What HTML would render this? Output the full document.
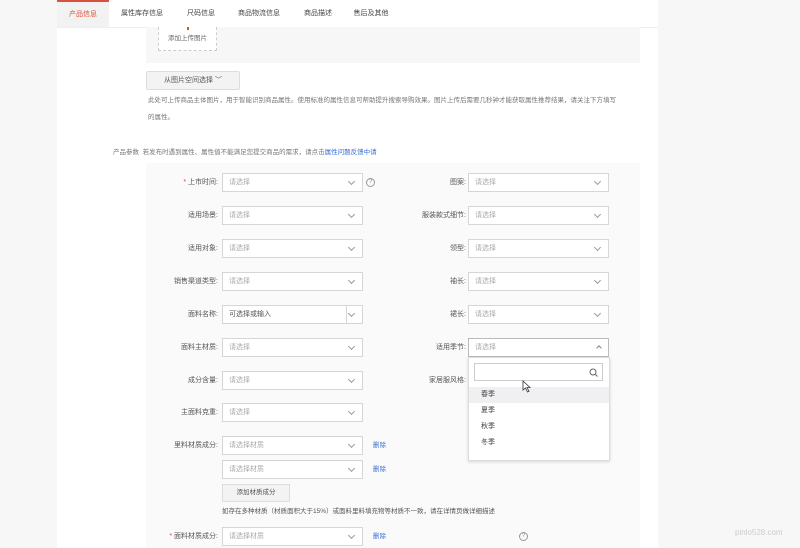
<!DOCTYPE html>
<html><head><meta charset="utf-8"><style>
*{margin:0;padding:0;box-sizing:border-box}
body{width:800px;height:548px;overflow:hidden;background:#f7f7f7;font-family:"Liberation Sans","Noto Sans CJK SC",sans-serif;font-size:7px;color:#555;position:relative}
.a{position:absolute}
.panel{left:57px;top:0;width:601px;height:548px;background:#fff}
.tab{top:0;height:27px;line-height:27px;font-size:7px;color:#444;text-align:center}
.sel{height:19px;border:1px solid #d6d6d6;background:#fff;color:#aaa;padding-left:6px;line-height:17px;font-size:7px}
.sel:after{content:"";position:absolute;right:8px;top:5px;width:4px;height:4px;border-right:1px solid #999;border-bottom:1px solid #999;transform:rotate(45deg)}
.lb{text-align:right;width:100px;font-size:7px;color:#555;line-height:19px}
.del{color:#3b6fd6;font-size:6.5px;line-height:19px}
.q{width:9px;height:9px;border:1px solid #999;border-radius:50%;font-size:6px;text-align:center;line-height:7px;color:#888}
</style></head><body>
<div class="a panel"></div>
<div class="a" style="left:57px;top:27px;width:601px;height:1px;background:#eee"></div>
<div class="a tab" style="left:57px;width:52px;background:#f2f2f2;color:#d9503e;border-top:2px solid #d9503e;line-height:25px">产品信息</div>
<div class="a tab" style="left:112px;width:60px">属性库存信息</div>
<div class="a tab" style="left:176px;width:50px">尺码信息</div>
<div class="a tab" style="left:229px;width:60px">商品物流信息</div>
<div class="a tab" style="left:293px;width:50px">商品描述</div>
<div class="a tab" style="left:345px;width:52px">售后及其他</div>
<div class="a" style="left:146px;top:27px;width:494px;height:36px;background:#f7f7f7"></div>
<div class="a" style="left:158px;top:27px;width:59px;height:24px;border:1px dashed #ccc;border-top:none;background:#fff;text-align:center;line-height:24px;font-size:6.5px;color:#666">添加上传图片</div>
<div class="a" style="left:187px;top:27px;width:2px;height:3px;background:#d9503e"></div>
<div class="a" style="left:146px;top:71px;width:94px;height:19px;border:1px solid #ddd;background:#f3f3f3;border-radius:2px;text-align:center;line-height:17px;font-size:7px;color:#555">从图片空间选择 ﹀</div>
<div class="a" style="left:148px;top:92px;width:472px;font-size:6.5px;color:#777;line-height:17px">此处可上传商品主体图片，用于智能识别商品属性。使用标准的属性信息可帮助提升搜索导购效果。图片上传后需要几秒钟才能获取属性推荐结果，请关注下方填写的属性。</div>
<div class="a" style="left:113px;top:146px;font-size:6.5px;color:#777">产品参数&nbsp;&nbsp;若发布时遇到属性、属性值不能满足您提交商品的需求，请点击<span style="color:#3b6fd6">属性问题反馈中请</span></div>
<div class="a" style="left:146px;top:163px;width:494px;height:385px;background:#fafafa"></div>

<div class="a lb" style="left:118px;top:173px"><span style="color:#d9503e">* </span>上市时间:</div><div class="a sel" style="left:222px;top:173px;width:141px">请选择</div><div class="a q" style="left:366px;top:178px">?</div>
<div class="a lb" style="left:118px;top:206px">适用场景:</div><div class="a sel" style="left:222px;top:206px;width:141px">请选择</div>
<div class="a lb" style="left:118px;top:239px">适用对象:</div><div class="a sel" style="left:222px;top:239px;width:141px">请选择</div>
<div class="a lb" style="left:118px;top:272px">销售渠道类型:</div><div class="a sel" style="left:222px;top:272px;width:141px">请选择</div>
<div class="a lb" style="left:118px;top:305px">面料名称:</div><div class="a sel" style="left:222px;top:305px;width:141px;color:#555">可选择或输入</div><div class="a" style="left:346px;top:305px;width:1px;height:19px;background:#d6d6d6"></div>
<div class="a lb" style="left:118px;top:338px">面料主材质:</div><div class="a sel" style="left:222px;top:338px;width:141px">请选择</div>
<div class="a lb" style="left:118px;top:371px">成分含量:</div><div class="a sel" style="left:222px;top:371px;width:141px">请选择</div>
<div class="a lb" style="left:118px;top:403px">主面料克重:</div><div class="a sel" style="left:222px;top:403px;width:141px">请选择</div>
<div class="a lb" style="left:118px;top:436px">里料材质成分:</div><div class="a sel" style="left:222px;top:436px;width:141px">请选择材质</div><div class="a del" style="left:373px;top:436px">删除</div>
<div class="a sel" style="left:222px;top:460px;width:141px">请选择材质</div><div class="a del" style="left:373px;top:460px">删除</div>
<div class="a" style="left:222px;top:484px;width:68px;height:18px;border:1px solid #ddd;background:#f3f3f3;text-align:center;line-height:16px;font-size:6.5px;color:#555">添加材质成分</div>
<div class="a" style="left:222px;top:505px;font-size:6.5px;color:#555">如存在多种材质（材质面积大于15%）或面料里料填充物等材质不一致，请在详情页做详细描述</div>
<div class="a lb" style="left:118px;top:527px"><span style="color:#d9503e">* </span>面料材质成分:</div><div class="a sel" style="left:222px;top:527px;width:141px">请选择材质</div><div class="a del" style="left:373px;top:527px">删除</div><div class="a q" style="left:519px;top:532px">?</div>

<div class="a lb" style="left:366px;top:173px">图案:</div><div class="a sel" style="left:468px;top:173px;width:141px">请选择</div>
<div class="a lb" style="left:366px;top:206px">服装款式细节:</div><div class="a sel" style="left:468px;top:206px;width:141px">请选择</div>
<div class="a lb" style="left:366px;top:239px">领型:</div><div class="a sel" style="left:468px;top:239px;width:141px">请选择</div>
<div class="a lb" style="left:366px;top:272px">袖长:</div><div class="a sel" style="left:468px;top:272px;width:141px">请选择</div>
<div class="a lb" style="left:366px;top:305px">裙长:</div><div class="a sel" style="left:468px;top:305px;width:141px">请选择</div>
<div class="a lb" style="left:366px;top:338px">适用季节:</div><div class="a" style="left:468px;top:338px;width:141px;height:19px;border:1px solid #bbb;background:#fff;color:#aaa;padding-left:6px;line-height:17px">请选择<span class="a" style="right:7px;top:7px;width:4px;height:4px;border-left:1px solid #888;border-top:1px solid #888;transform:rotate(45deg)"></span></div>
<div class="a lb" style="left:366px;top:371px">家居服风格:</div>
<div class="a" style="left:468px;top:357px;width:142px;height:104px;background:#fff;border:1px solid #ddd;box-shadow:0 1px 3px rgba(0,0,0,.15)"></div>
<div class="a" style="left:474px;top:363px;width:129px;height:18px;border:1px solid #ccc;background:#fff"><svg class="a" style="right:4px;top:4px" width="9" height="9" viewBox="0 0 9 9"><circle cx="4" cy="4" r="3" fill="none" stroke="#666" stroke-width="1"/><line x1="6.2" y1="6.2" x2="8.5" y2="8.5" stroke="#666"/></svg></div>
<div class="a" style="left:469px;top:387px;width:140px;height:16px;background:#f0f0f2"></div>
<div class="a" style="left:481px;top:387px;line-height:16px;color:#444">春季</div>
<div class="a" style="left:481px;top:403px;line-height:16px;color:#444">夏季</div>
<div class="a" style="left:481px;top:419px;line-height:16px;color:#444">秋季</div>
<div class="a" style="left:481px;top:435px;line-height:16px;color:#444">冬季</div>
<svg class="a" style="left:522px;top:380px" width="10" height="13" viewBox="0 0 10 13"><path d="M1 1 L1 10 L3.5 8 L5.5 12 L7 11.3 L5 7.5 L8 7.5 Z" fill="#fff" stroke="#333" stroke-width="0.8"/></svg>
<div class="a" style="left:735px;top:528px;color:#ccc;font-size:8px">pinlo528.com</div>
</body></html>
